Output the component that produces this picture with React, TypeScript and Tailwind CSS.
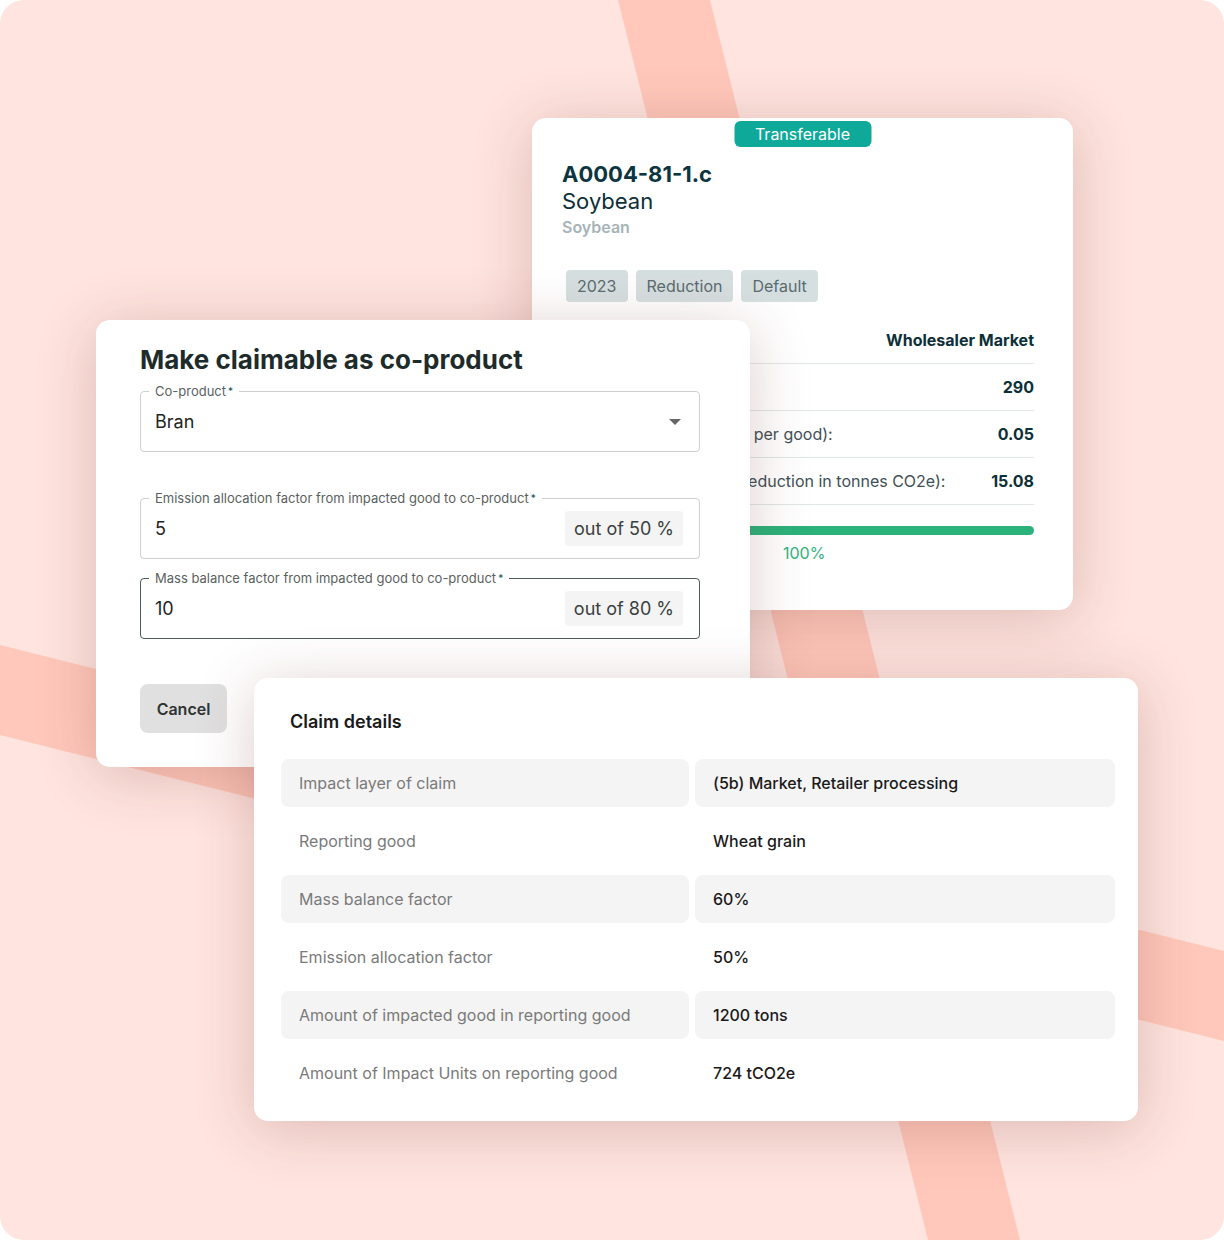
import React from "react";

const inter = { fontFamily: "Inter, 'Noto Sans', sans-serif" };

const claimRows = [
  { label: "Impact layer of claim", value: "(5b) Market, Retailer processing", shaded: true },
  { label: "Reporting good", value: "Wheat grain", shaded: false },
  { label: "Mass balance factor", value: "60%", shaded: true },
  { label: "Emission allocation factor", value: "50%", shaded: false },
  { label: "Amount of impacted good in reporting good", value: "1200 tons", shaded: true },
  { label: "Amount of Impact Units on reporting good", value: "724 tCO2e", shaded: false },
];

const marketRows = [
  { label: "Units:", value: "290" },
  { label: "tCO2e per good):", value: "0.05" },
  { label: "Total reduction in tonnes CO2e):", value: "15.08" },
];

const Backdrop = () => (
  <svg className="absolute inset-0" width="1224" height="1240" viewBox="0 0 1224 1240">
    <rect width="1224" height="1240" fill="#FFE4DF" />
    <polygon points="618,0 710,0 1020,1240 928,1240" fill="#FFC8BB" />
    <polygon points="0,645 1224,951 1224,1041 0,735" fill="#FFC8BB" />
  </svg>
);

const CertificateCard = () => (
  <div className="absolute left-[532px] top-[118px] w-[541px] h-[492px] rounded-[14px] bg-white shadow-[0_8px_60px_rgba(110,50,40,0.24)]">
    <div className="absolute left-1/2 top-[3px] -translate-x-1/2 w-[137px] h-[26px] rounded-[6px] bg-[#0FA99A] text-white text-[16px] leading-[26px] text-center">
      Transferable
    </div>
    <div className="pl-[30px] pr-[39px] pt-[43px]">
      <div className="text-[22px] leading-[27px] font-bold text-[#0C3540]">A0004-81-1.c</div>
      <div className="text-[22px] leading-[27px] text-[#0C2F38]">Soybean</div>
      <div className="text-[16px] leading-[24px] font-semibold text-[#A5B4B7]">Soybean</div>
      <div className="flex gap-2 mt-[31px] ml-1">
        {["2023", "Reduction", "Default"].map((c) => (
          <span key={c} className="h-8 px-[11px] rounded-[4px] bg-[#D6DFE0] text-[#5A6B70] text-[16px] leading-8">
            {c}
          </span>
        ))}
      </div>
      <div className="ml-[139px] mt-[26px]">
        <div className="text-right text-[16px] leading-6 font-bold text-[#0C2F38] pb-[11px] border-b border-[#E1E7E7]">
          Wholesaler Market
        </div>
        {marketRows.map((r) => (
          <div key={r.value} className="flex justify-between items-center h-[47px] border-b border-[#E1E7E7] text-[16px]">
            <span className="text-[#3E5056]">{r.label}</span>
            <span className="font-bold text-[#0C2F38]">{r.value}</span>
          </div>
        ))}
        <div className="mt-[21px] h-[9px] rounded-full bg-[#2BB27A]" />
      </div>
      <div className="mt-[8px] pl-[221px] text-[16px] leading-5 text-[#2FB47C]">100%</div>
    </div>
  </div>
);

const Field = ({
  label,
  value,
  suffix,
  focused,
  select,
}: {
  label: string;
  value: string;
  suffix?: string;
  focused?: boolean;
  select?: boolean;
}) => (
  <div
    className={`relative h-[61px] rounded-[4px] flex items-center pl-[14px] pr-4 ${
      focused ? "border-[1.5px] border-[#4F5A5A]" : "border border-[#CDD0D0]"
    }`}
  >
    <span className="absolute left-[8px] -top-[9px] bg-white px-[6px] text-[13px] leading-4 text-[#5A5F5F] whitespace-nowrap">
      {label}
      <span className="text-[#0B5060] text-[10px] align-top ml-[2px]">*</span>
    </span>
    <span className="flex-1 text-[18px] text-[#1E2424]">{value}</span>
    {suffix && (
      <span className="h-[35px] px-[9px] rounded-[4px] bg-[#F4F4F4] text-[18px] leading-[35px] text-[#3A3F3F]">
        {suffix}
      </span>
    )}
    {select && (
      <svg width="12" height="6" viewBox="0 0 12 6" className="mr-[2px]">
        <path d="M0 0 L12 0 L6 6 Z" fill="#666" />
      </svg>
    )}
  </div>
);

const CoProductDialog = () => (
  <div className="absolute left-[96px] top-[320px] w-[654px] h-[447px] rounded-[14px] bg-white shadow-[0_8px_60px_rgba(110,50,40,0.24)] px-[44px] pt-[22px]">
    <h2 className="text-[26px] leading-9 font-bold text-[#1E2B2B]">Make claimable as co-product</h2>
    <div className="w-[560px] mt-[13px]">
      <Field label="Co-product" value="Bran" select />
      <div className="mt-[46px]">
        <Field label="Emission allocation factor from impacted good to co-product" value="5" suffix="out of 50 %" />
      </div>
      <div className="mt-[19px]">
        <Field label="Mass balance factor from impacted good to co-product" value="10" suffix="out of 80 %" focused />
      </div>
    </div>
    <button className="mt-[45px] w-[87px] h-[49px] rounded-[8px] bg-[#E0E0E0] text-[16px] font-semibold text-[#2F3333]">
      Cancel
    </button>
  </div>
);

const ClaimDetails = () => (
  <div className="absolute left-[254px] top-[678px] w-[884px] h-[443px] rounded-[14px] bg-white shadow-[0_8px_60px_rgba(110,50,40,0.24)] pl-[27px] pr-[23px] pt-[30px]">
    <div className="pl-[9px] text-[18px] leading-7 font-semibold text-[#1A1A1A]">Claim details</div>
    <div className="mt-[23px] flex flex-col gap-[10px]">
      {claimRows.map((r) => (
        <div key={r.label} className="grid grid-cols-[408px_1fr] gap-[6px] h-12 text-[16px]">
          <div className={`flex items-center pl-[18px] rounded-[8px] text-[#7A7A7A] ${r.shaded ? "bg-[#F4F4F4]" : ""}`}>
            {r.label}
          </div>
          <div className={`flex items-center pl-[18px] rounded-[8px] font-medium text-[#1A1A1A] ${r.shaded ? "bg-[#F4F4F4]" : ""}`}>
            {r.value}
          </div>
        </div>
      ))}
    </div>
  </div>
);

export default function App() {
  return (
    <div className="bg-white">
      <div className="relative w-[1224px] h-[1240px] overflow-hidden rounded-[24px]" style={inter}>
        <Backdrop />
        <CertificateCard />
        <CoProductDialog />
        <ClaimDetails />
      </div>
    </div>
  );
}
